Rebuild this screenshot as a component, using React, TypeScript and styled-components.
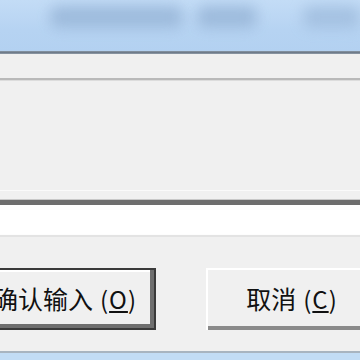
import styled, { createGlobalStyle } from "styled-components";

const GlobalStyle = createGlobalStyle`
  html, body {
    margin: 0;
    padding: 0;
    background: #f0f0f0;
    overflow: hidden;
  }
  body {
    font-family: "Noto Sans CJK SC", "Liberation Sans", sans-serif;
  }
`;

const Window = styled.div`
  width: 360px;
  height: 360px;
  display: flex;
  flex-direction: column;
  background: #f0f0f0;
  overflow: hidden;
`;

const TitleBar = styled.div`
  height: 51px;
  flex-shrink: 0;
  display: flex;
  align-items: flex-start;
  padding-top: 6px;
  box-sizing: border-box;
  background: linear-gradient(180deg, #c3dcf6 0%, #b6d3f2 60%, #b3d1f1 100%);
  overflow: hidden;
`;

const TitleBlob = styled.span<{ $w: number; $ml: number; $o?: number }>`
  display: block;
  width: ${(p) => p.$w}px;
  height: 22px;
  margin-left: ${(p) => p.$ml}px;
  background: #98b6d8;
  opacity: ${(p) => p.$o ?? 0.85};
  filter: blur(7px);
  border-radius: 8px;
`;

const TitleEdge = styled.div`
  height: 3px;
  flex-shrink: 0;
  background: linear-gradient(180deg, #8a98a6 0%, #6a7684 60%, #9aa6b2 100%);
`;

const MenuStrip = styled.div`
  height: 24px;
  flex-shrink: 0;
  border-bottom: 2px solid #b9b9b9;
  box-shadow: 0 1px 0 #dcdcdc;
`;

const Body = styled.div`
  height: 110px;
  flex-shrink: 0;
`;

const Field = styled.div`
  flex-shrink: 0;
  border-top: 1px solid #fafafa;
  padding-top: 9px;
`;

const FieldBox = styled.div`
  height: 30px;
  background: #ffffff;
  border-top: 5px solid #6e6e6e;
  border-bottom: 2px solid #e3e3e3;
  box-shadow: inset 0 -1px 0 #fdfdfd, 0 -1px 0 #c8c8c8;
`;

const ButtonRow = styled.div`
  display: flex;
  gap: 50px;
  margin-top: 31px;
  margin-left: -26px;
  flex-shrink: 0;
`;

const Button = styled.button<{ $default?: boolean }>`
  flex-shrink: 0;
  width: ${(p) => (p.$default ? 182 : 172)}px;
  height: 62px;
  box-sizing: border-box;
  padding: 0 0 2px;
  margin: 0;
  background: #f0f0f0;
  color: #111;
  font-family: "Noto Sans CJK SC", "Liberation Sans", sans-serif;
  font-size: 25px;
  border: ${(p) => (p.$default ? "2px solid #3a3a3a" : "none")};
  box-shadow: ${(p) =>
    p.$default
      ? "inset -4px -4px 0 #6f6f6f, inset 2px 2px 0 #ffffff"
      : "inset 2px 2px 0 #ffffff, inset -2px -4px 0 #8a8a8a, inset -1px -1px 0 #5e5e5e"};
  display: flex;
  align-items: center;
  justify-content: center;
`;

const Mnemonic = styled.span`
  margin-left: 7px;
  font-size: 24px;
  letter-spacing: 1px;
  u {
    text-decoration-thickness: 2px;
    text-underline-offset: 2px;
  }
`;

const Spacer = styled.div`
  flex: 1;
`;

const BottomEdge = styled.div`
  height: 7px;
  flex-shrink: 0;
  border-top: 2px solid #a8b4c0;
  background: #c2dcf5;
`;

export default function App() {
  return (
    <>
      <GlobalStyle />
      <Window>
        <TitleBar>
          <TitleBlob $w={140} $ml={50} />
          <TitleBlob $w={64} $ml={14} />
          <TitleBlob $w={60} $ml={46} $o={0.65} />
        </TitleBar>
        <TitleEdge />
        <MenuStrip />
        <Body />
        <Field>
          <FieldBox />
        </Field>
        <ButtonRow>
          <Button $default>
            确认输入
            <Mnemonic>
              (<u>O</u>)
            </Mnemonic>
          </Button>
          <Button>
            取消
            <Mnemonic>
              (<u>C</u>)
            </Mnemonic>
          </Button>
        </ButtonRow>
        <Spacer />
        <BottomEdge />
      </Window>
    </>
  );
}
